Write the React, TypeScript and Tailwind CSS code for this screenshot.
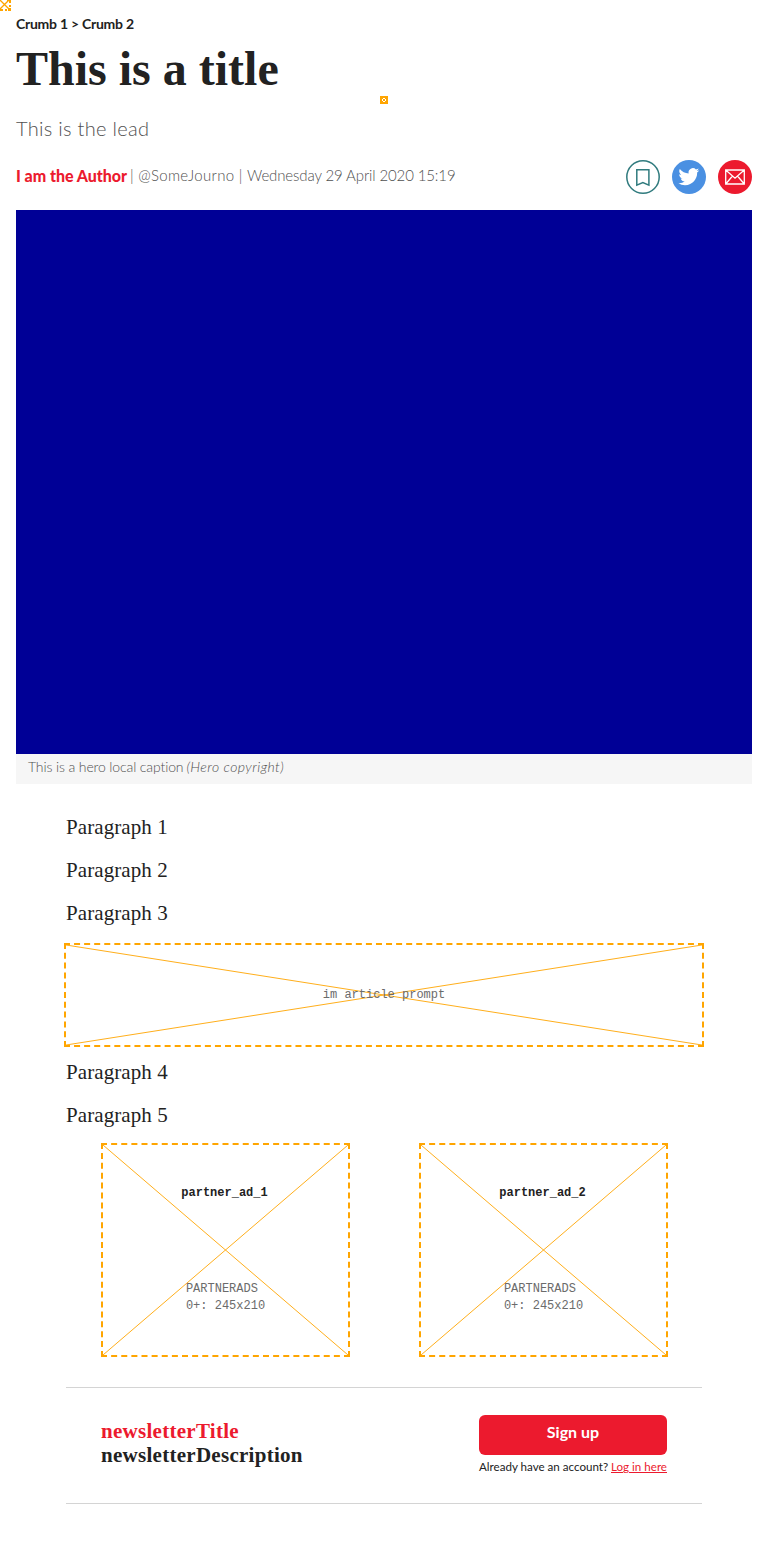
function Cross() {
  return (
    <svg className="absolute inset-0 h-full w-full" viewBox="0 0 100 100" preserveAspectRatio="none">
      <path d="M0 0L100 100M100 0L0 100" stroke="orange" strokeWidth="0.9" fill="none" vectorEffect="non-scaling-stroke" />
    </svg>
  );
}

function PartnerAd({ name }: { name: string }) {
  return (
    <div className="relative flex h-[214px] w-[249px] shrink-0 flex-col items-center border-2 border-dashed border-[#ffa500] font-['Liberation_Mono',monospace] text-[12px]">
      <Cross />
      <div className="relative mt-[40px] pr-[2px] font-bold leading-[17px] text-[#222]">{name}</div>
      <div className="relative mt-[79px] leading-[17px] text-[#6b6b6b]">
        PARTNERADS
        <br />
        0+: 245x210
      </div>
    </div>
  );
}

export default function App() {
  return (
    <main className="relative h-[1544px] w-[768px] overflow-hidden bg-white font-['Lato','Open_Sans',sans-serif] text-[#222]">
      <svg className="absolute left-0 top-0" width="12" height="12" viewBox="0 0 12 12">
        <path d="M0 0L9 9M9 0L0 9" stroke="orange" strokeWidth="1.3" />
        <path d="M7 0h4v1h-4zM9 1h2v2h-2zM9 5h2v2h-2zM0 9h3v2h-3zM5 9h2v2h-2zM8 9h3v2h-3zM9 8h2v3h-2zM0 8h1v3h-1z" fill="orange" />
      </svg>
      <header className="px-4 pt-4">
        <nav className="h-4 text-[14px] font-bold leading-4 tracking-[-0.25px]">Crumb 1 &gt; Crumb 2</nav>
        <h1 className="mt-[10px] h-[54px] font-['Liberation_Serif',serif] text-[48px] font-bold leading-[54px]">
          This is a title
        </h1>
        <div className="flex h-2 justify-center">
          <svg width="8" height="8" viewBox="0 0 8 8" shapeRendering="crispEdges">
            <path d="M0 0h8v8H0z" fill="orange" />
            <path d="M3 2h2v1h1v2h-1v1h-2v-1h-1v-2h1z" fill="#fff" />
            <path d="M3 3h2v2H3z" fill="orange" />
          </svg>
        </div>
        <p className="mt-3 h-6 text-[20px] font-light leading-6 tracking-[0.3px] text-[#505050]">This is the lead</p>
        <div className="mt-5 flex h-[34px] items-center text-[#505050]">
          <span className="-mt-[3px] text-[16px] font-black tracking-[-0.04px] text-[#ec1a2e]">I am the Author</span>
          <span className="-mt-[3px] ml-[3px] whitespace-pre text-[15px] font-light tracking-[0.3px]">| @SomeJourno | </span>
          <span className="-mt-[3px] text-[15px] font-light tracking-[-0.12px]">Wednesday 29 April 2020 15:19</span>
          <div className="ml-auto flex gap-3">
            <svg width="34" height="34" viewBox="0 0 34 34" fill="none" stroke="#307b7e" strokeWidth="1.5">
              <circle cx="17" cy="17" r="16.2" />
              <path d="M10.8 9.8h12.1v15.4L16.85 22.6 10.8 25.2z" />
            </svg>
            <svg width="34" height="34" viewBox="0 0 34 34">
              <circle cx="17" cy="17" r="17" fill="#4a90e2" />
              <path transform="translate(6.4 6.2) scale(.87)" fill="#fff" d="M23.953 4.57a10 10 0 01-2.825.775 4.958 4.958 0 002.163-2.723c-.951.555-2.005.959-3.127 1.184a4.92 4.92 0 00-8.384 4.482C7.69 8.095 4.067 6.13 1.64 3.162a4.822 4.822 0 00-.666 2.475c0 1.71.87 3.213 2.188 4.096a4.904 4.904 0 01-2.228-.616v.06a4.923 4.923 0 003.946 4.827 4.996 4.996 0 01-2.212.085 4.936 4.936 0 004.604 3.417 9.867 9.867 0 01-6.102 2.105c-.39 0-.779-.023-1.17-.067a13.995 13.995 0 007.557 2.209c9.053 0 13.998-7.496 13.998-13.985 0-.21 0-.42-.015-.63A9.935 9.935 0 0024 4.59z" />
            </svg>
            <svg width="34" height="34" viewBox="0 0 34 34" fill="none">
              <circle cx="17" cy="17" r="17" fill="#ec1a2e" />
              <path d="M7.7 10h18.6v14H7.7zM7.7 10l9.3 8.2L26.3 10M7.7 24l6.8-8M26.3 24l-6.8-8" stroke="#fff" strokeWidth="1.3" />
            </svg>
          </div>
        </div>
      </header>
      <figure className="mx-4 mt-4">
        <div className="h-[544px] bg-[#000096]" />
        <figcaption className="flex h-[30px] items-start bg-[#f6f6f6] px-3 pt-1 text-[14px] font-light leading-[17px] text-[#505050]">
          <span className="tracking-[-0.12px]">This is a hero local caption</span>
          <span className="ml-[3px] italic tracking-[0.42px]">(Hero copyright)</span>
        </figcaption>
      </figure>
      <section className="mx-[66px] mt-[29px] font-['Liberation_Serif',serif] text-[21px] leading-[28px] tracking-[0.08px]">
        <p>Paragraph 1</p>
        <p className="mt-[15px]">Paragraph 2</p>
        <p className="mt-[15px]">Paragraph 3</p>
        <div className="relative -mx-[2px] mt-4 flex h-[104px] items-center justify-center border-2 border-dashed border-[#ffa500] font-['Liberation_Mono',monospace] text-[12px] tracking-normal text-[#6b6b6b]">
          <Cross />
          <span className="relative">im article prompt</span>
        </div>
        <p className="mt-[11px]">Paragraph 4</p>
        <p className="mt-[15px]">Paragraph 5</p>
        <div className="mt-[14px] flex gap-[69px] pl-[35px] tracking-normal">
          <PartnerAd name="partner_ad_1" />
          <PartnerAd name="partner_ad_2" />
        </div>
      </section>
      <section className="mx-[66px] mt-[30px] flex h-[117px] justify-between border-y border-[#d4d4d4] px-[35px]">
        <div className="pt-[31px] font-['Liberation_Serif',serif] text-[21px] font-bold leading-6 tracking-[0.28px]">
          <h2 className="text-[#ec1a2e]">newsletterTitle</h2>
          <p>newsletterDescription</p>
        </div>
        <div className="w-[188px] pt-[27px]">
          <button className="block h-10 w-full rounded-[6px] bg-[#ec1a2e] pb-[6px] text-[16px] font-bold text-white">Sign up</button>
          <div className="mt-1 flex justify-between whitespace-nowrap text-[11.6px] leading-4">
            <span>Already have an account?</span>
            <a className="text-[#ec1a2e] underline">Log in here</a>
          </div>
        </div>
      </section>
    </main>
  );
}
